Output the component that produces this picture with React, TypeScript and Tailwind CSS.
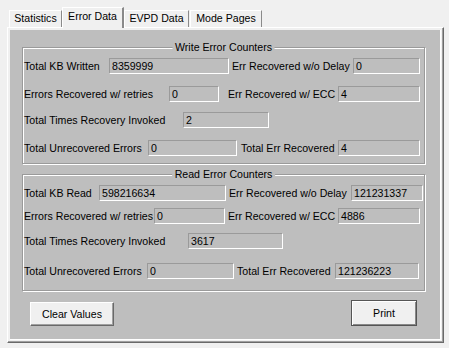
import React from "react";

const fieldBase =
  "shrink-0 h-[16px] border border-t-[#9a9a9a] border-l-[#9a9a9a] border-r-white border-b-white pl-[2px] leading-[14px] whitespace-nowrap overflow-hidden text-black";

function Field({ className, value }: { className: string; value: string }) {
  return <div className={`${fieldBase} ${className}`}>{value}</div>;
}

function Label({ className, text }: { className: string; text: string }) {
  return <span className={`shrink-0 whitespace-nowrap leading-[16px] ${className}`}>{text}</span>;
}

function Group({
  title,
  className,
  children,
}: {
  title: string;
  className: string;
  children: React.ReactNode;
}) {
  return (
    <div
      className={`relative ml-[12px] w-[403px] h-[117px] border border-[#9a9a9a] shadow-[inset_1px_1px_0_#ffffff,1px_1px_0_#ffffff] ${className}`}
    >
      <span className="absolute left-1/2 -translate-x-1/2 top-[-7px] bg-[#bebebe] px-[3px] leading-[12px] whitespace-nowrap">
        {title}
      </span>
      {children}
    </div>
  );
}

export default function App() {
  return (
    <div
      className="w-[449px] h-[348px] bg-[#f0f0f0] text-black overflow-hidden"
      style={{ fontFamily: '"Liberation Sans", Arial, sans-serif', fontSize: "10.6px" }}
    >
      {/* tab strip */}
      <div className="relative z-10 flex items-end h-[28px] pl-[9px]">
        <div className="w-[53px] h-[17px] mb-[1px] border-t border-l border-white border-r border-r-[#8a8a8a] bg-[#f0f0f0] text-center pt-[1px] leading-[12px]">
          Statistics
        </div>
        <div className="w-[62px] h-[21px] border-t border-l border-white border-r-2 border-r-[#8a8a8a] bg-[#f0f0f0] text-center pt-[2px] leading-[12px]">
          Error Data
        </div>
        <div className="w-[65px] h-[17px] mb-[1px] border-t border-l border-white border-r border-r-[#8a8a8a] bg-[#f0f0f0] text-center pt-[1px] leading-[12px]">
          EVPD Data
        </div>
        <div className="ml-[1px] w-[72px] h-[17px] mb-[1px] border-t border-l border-white border-r border-r-[#8a8a8a] bg-[#f0f0f0] text-center pt-[1px] leading-[12px]">
          Mode Pages
        </div>
      </div>

      {/* tab page */}
      <div className="ml-[7px] -mt-[1px] w-[437px] h-[316px] border-t border-l border-white border-r border-b border-r-[#696969] border-b-[#696969]">
        <div className="w-full h-full border-r border-b border-r-[#a0a0a0] border-b-[#a0a0a0] pl-[2px] pt-[2px] pr-[1px] pb-[1px]">
          <div className="w-full h-full bg-[#bebebe] border-r border-b border-white flex flex-col">
            {/* Write group */}
            <Group title="Write Error Counters" className="mt-[17px]">
              <div className="flex items-center mt-[10px] pl-[1px]">
                <Label className="w-[85px]" text="Total KB Written" />
                <Field className="w-[120px]" value="8359999" />
                <Label className="ml-[3px] w-[121px]" text="Err Recovered w/o Delay" />
                <Field className="w-[67px]" value="0" />
              </div>
              <div className="flex items-center mt-[12px] pl-[1px]">
                <Label className="w-[145px]" text="Errors Recovered w/ retries" />
                <Field className="w-[50px]" value="0" />
                <Label className="ml-[9px] w-[110px]" text="Err Recovered w/ ECC" />
                <Field className="w-[82px]" value="4" />
              </div>
              <div className="flex items-center mt-[10px] pl-[1px]">
                <Label className="w-[159px]" text="Total Times Recovery Invoked" />
                <Field className="w-[86px]" value="2" />
              </div>
              <div className="flex items-center mt-[12px] pl-[1px]">
                <Label className="w-[124px]" text="Total Unrecovered Errors" />
                <Field className="w-[89px]" value="0" />
                <Label className="ml-[4px] w-[97px]" text="Total Err Recovered" />
                <Field className="w-[82px]" value="4" />
              </div>
            </Group>

            {/* Read group */}
            <Group title="Read Error Counters" className="mt-[10px]">
              <div className="flex items-center mt-[10px] pl-[1px]">
                <Label className="w-[75px]" text="Total KB Read" />
                <Field className="w-[127px]" value="598216634" />
                <Label className="ml-[3px] w-[122px]" text="Err Recovered w/o Delay" />
                <Field className="w-[72px]" value="121231337" />
              </div>
              <div className="flex items-center mt-[7px] pl-[1px]">
                <Label className="w-[130px]" text="Errors Recovered w/ retries" />
                <Field className="w-[71px]" value="0" />
                <Label className="ml-[3px] w-[110px]" text="Err Recovered w/ ECC" />
                <Field className="w-[82px]" value="4886" />
              </div>
              <div className="flex items-center mt-[9px] pl-[1px]">
                <Label className="w-[164px]" text="Total Times Recovery Invoked" />
                <Field className="w-[95px]" value="3617" />
              </div>
              <div className="flex items-center mt-[14px] pl-[1px]">
                <Label className="w-[123px]" text="Total Unrecovered Errors" />
                <Field className="w-[87px]" value="0" />
                <Label className="ml-[3px] w-[98px]" text="Total Err Recovered" />
                <Field className="w-[84px]" value="121236223" />
              </div>
            </Group>

            {/* buttons */}
            <div className="flex items-end mt-[9px]">
              <button className="ml-[20px] w-[84px] h-[24px] bg-[#f0f0f0] border-t border-l border-white border-r border-b border-r-[#696969] border-b-[#696969] shadow-[inset_-1px_-1px_0_#a0a0a0] text-center leading-[20px]">
                Clear Values
              </button>
              <button className="ml-[237px] w-[66px] h-[26px] bg-[#f0f0f0] border border-[#555555] shadow-[inset_1px_1px_0_#ffffff,inset_-1px_-1px_0_#888888] text-center leading-[22px]">
                Print
              </button>
            </div>
          </div>
        </div>
      </div>
    </div>
  );
}
